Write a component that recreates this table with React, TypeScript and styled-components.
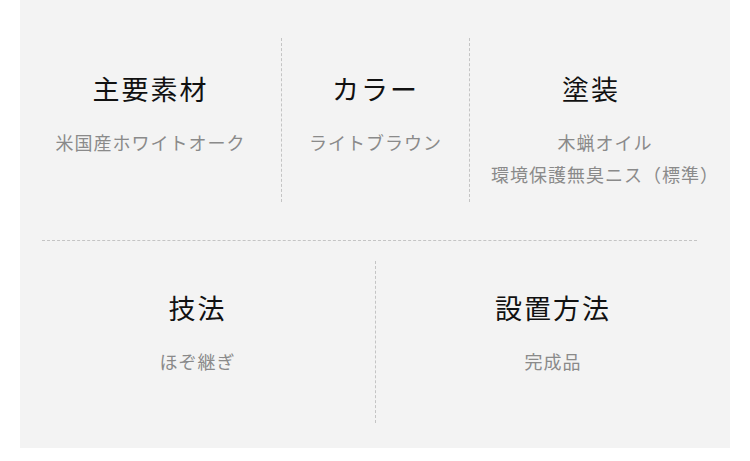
import styled, { createGlobalStyle } from "styled-components";

const GlobalStyle = createGlobalStyle`
  html, body {
    margin: 0;
    padding: 0;
    background: #ffffff;
  }
  body {
    font-family: "Noto Sans CJK JP", "Noto Sans", sans-serif;
  }
`;

interface Spec {
  title: string;
  values: string[];
  pull?: number;
  push?: number;
}

const topSpecs: Spec[] = [
  { title: "主要素材", values: ["米国産ホワイトオーク"] },
  { title: "カラー", values: ["ライトブラウン"] },
  {
    title: "塗装",
    values: ["木蝋オイル", "環境保護無臭ニス（標準）"],
    pull: 28,
    push: 10,
  },
];

const bottomSpecs: Spec[] = [
  { title: "技法", values: ["ほぞ継ぎ"] },
  { title: "設置方法", values: ["完成品"] },
];

const App = () => {
  return (
    <>
      <GlobalStyle />
      <Panel>
        <TopRow>
          {topSpecs.map((spec, i) => (
            <Cell key={spec.title} $divider={i > 0} $pad={33} $push={spec.push}>
              <Title $pull={spec.pull}>{spec.title}</Title>
              <Values>
                {spec.values.map((v) => (
                  <Value key={v}>{v}</Value>
                ))}
              </Values>
            </Cell>
          ))}
        </TopRow>
        <Separator />
        <BottomRow>
          {bottomSpecs.map((spec, i) => (
            <Cell key={spec.title} $divider={i > 0} $pad={29}>
              <Title>{spec.title}</Title>
              <Values>
                {spec.values.map((v) => (
                  <Value key={v}>{v}</Value>
                ))}
              </Values>
            </Cell>
          ))}
        </BottomRow>
      </Panel>
    </>
  );
};

const Panel = styled.div`
  width: 710px;
  height: 448px;
  margin-left: 20px;
  box-sizing: border-box;
  padding-top: 38px;
  background-color: #f3f3f3;
  display: flex;
  flex-direction: column;
`;

const TopRow = styled.div`
  display: grid;
  grid-template-columns: 261px 188px 261px;
  height: 164px;
`;

const BottomRow = styled.div`
  display: grid;
  grid-template-columns: 355px 355px;
  height: 162px;
  margin-top: 20px;
`;

const Separator = styled.div`
  margin: 38px 33px 0 22px;
  border-top: 1px dashed #c4c4c4;
`;

const Cell = styled.div<{ $divider?: boolean; $pad: number; $push?: number }>`
  display: flex;
  flex-direction: column;
  align-items: center;
  box-sizing: border-box;
  padding-top: ${(p) => p.$pad}px;
  padding-left: ${(p) => p.$push ?? 0}px;
  border-left: ${(p) => (p.$divider ? "1px dashed #c4c4c4" : "none")};
`;

const Title = styled.h3<{ $pull?: number }>`
  margin: 0;
  margin-right: ${(p) => p.$pull ?? 0}px;
  font-size: 27px;
  line-height: 36px;
  font-weight: 400;
  letter-spacing: 2px;
  color: #111111;
`;

const Values = styled.div`
  margin-top: 19px;
  display: flex;
  flex-direction: column;
  align-items: center;
`;

const Value = styled.p`
  margin: 0;
  font-size: 18px;
  line-height: 32px;
  letter-spacing: 1px;
  color: #8a8a8a;
  white-space: nowrap;
`;

export default App;
